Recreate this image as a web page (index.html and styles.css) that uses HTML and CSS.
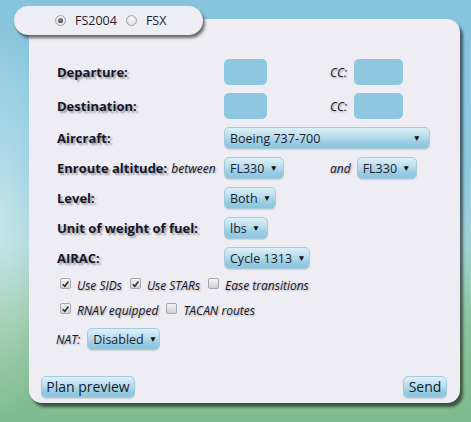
FILE: index.html
```html
<!DOCTYPE html>
<html lang="en">
<head>
<meta charset="utf-8">
<title>Flight plan</title>
<link rel="stylesheet" href="styles.css">
</head>
<body>
<div class="page">
  <div class="tab">
    <span class="radio checked"></span><span class="tab-label">FS2004</span>
    <span class="radio"></span><span class="tab-label">FSX</span>
  </div>
  <div class="panel">
    <div class="form-grid">
      <div class="label">Departure:</div>
      <div class="ctrl"><span class="box box-icao"></span><span class="cc">CC:</span><span class="box box-cc"></span></div>

      <div class="label">Destination:</div>
      <div class="ctrl"><span class="box box-icao"></span><span class="cc">CC:</span><span class="box box-cc"></span></div>

      <div class="label">Aircraft:</div>
      <div class="ctrl"><span class="select sel-aircraft"><span>Boeing 737-700</span><span class="arrow">▼</span></span></div>

      <div class="label">Enroute altitude: <em class="hint">between</em></div>
      <div class="ctrl"><span class="select sel-fl"><span>FL330</span><span class="arrow">▼</span></span><em class="and">and</em><span class="select sel-fl"><span>FL330</span><span class="arrow">▼</span></span></div>

      <div class="label">Level:</div>
      <div class="ctrl"><span class="select sel-both"><span>Both</span><span class="arrow">▼</span></span></div>

      <div class="label">Unit of weight of fuel:</div>
      <div class="ctrl"><span class="select sel-lbs"><span>lbs</span><span class="arrow">▼</span></span></div>

      <div class="label">AIRAC:</div>
      <div class="ctrl"><span class="select sel-cycle"><span>Cycle 1313</span><span class="arrow">▼</span></span></div>
    </div>

    <div class="options">
      <div class="opt-row">
        <span class="cb"><svg viewBox="0 0 10 10" width="10" height="10"><path d="M2 5.2 L4.2 7.6 L8.2 2.2" fill="none" stroke="#2a2a2a" stroke-width="1.7"/></svg></span><em class="opt">Use SIDs</em>
        <span class="cb"><svg viewBox="0 0 10 10" width="10" height="10"><path d="M2 5.2 L4.2 7.6 L8.2 2.2" fill="none" stroke="#2a2a2a" stroke-width="1.7"/></svg></span><em class="opt">Use STARs</em>
        <span class="cb"></span><em class="opt">Ease transitions</em>
      </div>
      <div class="opt-row">
        <span class="cb"><svg viewBox="0 0 10 10" width="10" height="10"><path d="M2 5.2 L4.2 7.6 L8.2 2.2" fill="none" stroke="#2a2a2a" stroke-width="1.7"/></svg></span><em class="opt">RNAV equipped</em>
        <span class="cb"></span><em class="opt">TACAN routes</em>
      </div>
      <div class="nat-row">
        <em class="nat">NAT:</em><span class="select sel-nat"><span>Disabled</span><span class="arrow">▼</span></span>
      </div>
    </div>

    <div class="actions">
      <button class="btn btn-preview">Plan preview</button>
      <button class="btn btn-send">Send</button>
    </div>
  </div>
</div>
</body>
</html>
```

FILE: styles.css
```css
html, body {
  margin: 0;
  padding: 0;
}
body {
  width: 471px;
  height: 422px;
  overflow: hidden;
  font-family: "Open Sans", "Noto Sans", sans-serif;
  color: #17182a;
  background:
    radial-gradient(ellipse 60px 200px at 0px 220px, rgba(230, 245, 245, 0.55), rgba(230, 245, 245, 0) 100%),
    linear-gradient(to bottom, #86c4dd 0%, #8fcae0 40%, #a2d2d6 58%, #93c8a8 72%, #86bf96 85%, #80bb8f 100%);
}
.page {
  padding-top: 6px;
}
.tab {
  position: relative;
  z-index: 2;
  margin-left: 14px;
  width: 189px;
  height: 29px;
  box-sizing: border-box;
  padding-left: 41px;
  display: flex;
  align-items: center;
  background: #eeedf3;
  border-radius: 15px;
  box-shadow: 2px 3px 3px rgba(0, 0, 0, 0.55);
}
.radio {
  width: 11px;
  height: 11px;
  box-sizing: border-box;
  border-radius: 50%;
  border: 1px solid #a5a5a8;
  background: radial-gradient(circle at 50% 35%, #fafafa, #d6d6d8);
  display: inline-flex;
  align-items: center;
  justify-content: center;
}
.radio.checked::after {
  content: "";
  width: 5px;
  height: 5px;
  border-radius: 50%;
  background: radial-gradient(circle at 40% 35%, #888, #3a3a3a);
}
.tab-label {
  font-size: 12.5px;
  margin: 0 9px 0 9px;
  color: #1c1c2a;
}
.panel {
  position: relative;
  z-index: 1;
  margin-left: 29px;
  margin-top: -16px;
  width: 431px;
  height: 384px;
  box-sizing: border-box;
  padding: 40px 13px 5px 12px;
  background: #eeedf3;
  border-radius: 13px;
  box-shadow: 3px 4px 3px rgba(0, 0, 0, 0.55);
  display: flex;
  flex-direction: column;
}
.form-grid {
  margin-left: 16px;
  display: grid;
  grid-template-columns: 167px auto;
  grid-template-rows: 26px 26px repeat(5, 22px);
  row-gap: 8px;
}
.label {
  display: flex;
  align-items: center;
  font-size: 13px;
  font-weight: 700;
  color: #15162a;
  text-shadow: 2px 2px 2px rgba(0, 0, 0, 0.35);
  white-space: nowrap;
}
.hint {
  font-weight: 400;
  font-size: 12px;
  margin-left: 4px;
  text-shadow: 1px 1px 2px rgba(0, 0, 0, 0.3);
}
.ctrl {
  display: flex;
  align-items: center;
}
.box {
  display: inline-block;
  height: 26px;
  background: #8ec7e0;
  border-radius: 5px;
}
.box-icao {
  width: 43px;
}
.box-cc {
  width: 49px;
}
.cc {
  margin-left: 63px;
  margin-right: 7px;
  font-size: 12px;
  font-style: italic;
  text-shadow: 1px 1px 2px rgba(0, 0, 0, 0.35);
}
.and {
  margin-left: 46px;
  margin-right: 6px;
  font-size: 12px;
  text-shadow: 1px 1px 2px rgba(0, 0, 0, 0.35);
}
.select {
  display: inline-flex;
  align-items: center;
  justify-content: space-between;
  gap: 5px;
  height: 22px;
  box-sizing: border-box;
  padding: 0 8px 0 5px;
  border: 1px solid #a3cadd;
  border-radius: 5px;
  background: linear-gradient(to bottom, #dcf0f9 0%, #b8dcec 45%, #9acde3 70%, #8cc5de 100%);
  box-shadow: 0 1px 1px rgba(0, 0, 0, 0.12);
  font-size: 12.5px;
  color: #1a1d2e;
  white-space: nowrap;
}
.arrow {
  font-size: 8.5px;
  color: #111;
  margin-top: -2px;
}
.sel-aircraft { width: 206px; }
.sel-fl { width: 60px; }
.sel-both { width: 52px; }
.sel-lbs { width: 44px; padding-right: 10px; }
.sel-cycle { width: 86px; }
.sel-nat { width: 73px; }

.options {
  margin-top: 7px;
  margin-left: 19px;
  display: flex;
  flex-direction: column;
}
.opt-row {
  height: 19px;
  display: flex;
  align-items: center;
  margin-bottom: 6px;
}
.cb {
  width: 11px;
  height: 11px;
  box-sizing: border-box;
  border: 1px solid #a8a8ac;
  border-radius: 2px;
  background: linear-gradient(to bottom, #f4f4f6, #cfcfd3);
  display: inline-flex;
  align-items: center;
  justify-content: center;
  margin-top: -4px;
  margin-right: 6px;
}
.cb svg {
  display: block;
}
.opt {
  font-size: 12px;
  margin-right: 8px;
  color: #17182a;
  text-shadow: 1px 1px 2px rgba(0, 0, 0, 0.3);
}
.nat-row {
  margin-left: -4px;
  display: flex;
  align-items: center;
  height: 22px;
  margin-top: 2px;
}
.nat {
  font-size: 12px;
  margin-right: 7px;
  text-shadow: 1px 1px 2px rgba(0, 0, 0, 0.3);
}
.actions {
  margin-top: auto;
  display: flex;
  justify-content: space-between;
}
.btn {
  height: 22px;
  box-sizing: border-box;
  padding: 0;
  border: 1px solid #a3cadd;
  border-radius: 5px;
  background: linear-gradient(to bottom, #dcf0f9 0%, #b8dcec 45%, #9acde3 70%, #8cc5de 100%);
  box-shadow: 0 1px 1px rgba(0, 0, 0, 0.12);
  font-family: "Open Sans", "Noto Sans", sans-serif;
  font-size: 14px;
  color: #141a2c;
  line-height: 20px;
}
.btn-preview { width: 94px; }
.btn-send { width: 44px; }
```
